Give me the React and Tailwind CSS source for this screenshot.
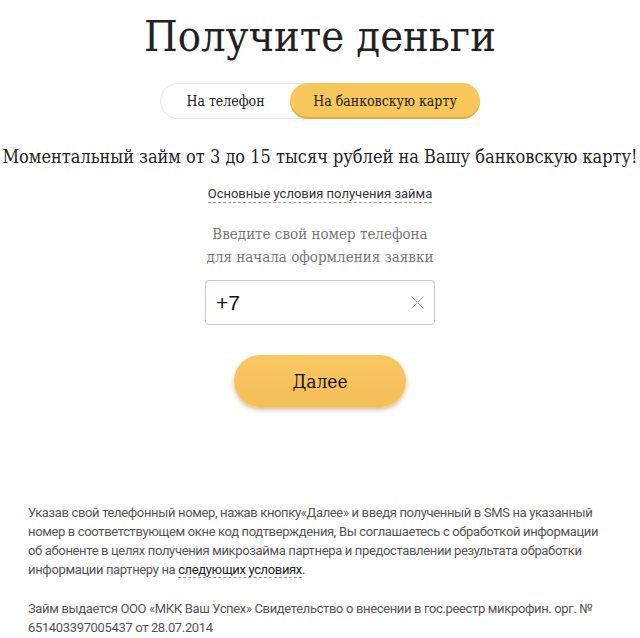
import React, { useState } from "react";

export default function App() {
  const [mode, setMode] = useState("card");
  const [phone, setPhone] = useState("+7");

  const serif = { fontFamily: '"DejaVu Serif Condensed", "DejaVu Serif", serif' };
  const narrow = { fontFamily: 'Roboto, "Liberation Sans", sans-serif' };

  return (
    <div className="w-[640px] h-[638px] bg-white overflow-hidden text-[#222]">
      <h1
        className="text-center text-[43px] leading-none pt-[15px] font-normal text-[#222]"
        style={serif}
      >
        Получите деньги
      </h1>

      {/* Переключатель */}
      <div className="flex justify-center mt-[25px]">
        <div className="flex w-[320px] h-[36px] rounded-full border border-[#e6e6e6]">
          <button
            className="flex-1 text-[14px] text-[#222]"
            style={serif}
            onClick={() => setMode("phone")}
          >
            На телефон
          </button>
          <button
            className={`w-[190px] -my-px -mr-px rounded-full text-[14px] text-[#222] ${
              mode === "card"
                ? "bg-[#f8c75c] shadow-[inset_0_-2px_0_#e7ad3c]"
                : "bg-transparent"
            }`}
            style={serif}
            onClick={() => setMode("card")}
          >
            На банковскую карту
          </button>
        </div>
      </div>

      <p className="text-center text-[18px] mt-[24px] text-[#222] whitespace-nowrap" style={serif}>
        Моментальный займ от 3 до 15 тысяч рублей на Вашу банковскую карту!
      </p>

      <div className="flex justify-center mt-[16px]">
        <a
          href="#"
          className="text-[13px] text-[#333] border-b border-dashed border-[#999] leading-[16px]"
          style={narrow}
        >
          Основные условия получения займа
        </a>
      </div>

      <p
        className="text-center text-[15px] leading-[23px] text-[#777] mt-[20px]"
        style={serif}
      >
        Введите свой номер телефона
        <br />
        для начала оформления заявки
      </p>

      <div className="flex justify-center mt-[11px]">
        <div className="relative w-[230px] h-[45px] border border-[#c8c8c8] rounded-[4px]">
          <input
            value={phone}
            onChange={(e) => setPhone(e.target.value)}
            className="w-full h-full pl-[10px] pr-[36px] text-[21px] text-[#111] outline-none bg-transparent"
            style={{ fontFamily: '"Liberation Sans", Arial, sans-serif' }}
          />
          <button
            className="absolute right-[10px] top-[15px] w-[13px] h-[13px] text-[#999]"
            onClick={() => setPhone("")}
          >
            <svg viewBox="0 0 13 13" className="w-[13px] h-[13px]" fill="none" stroke="currentColor" strokeWidth="1">
              <path d="M0.5 0.5 12.5 12.5M12.5 0.5 0.5 12.5" />
            </svg>
          </button>
        </div>
      </div>

      <div className="flex justify-center mt-[30px]">
        <button
          className="w-[172px] h-[52px] rounded-full text-[19px] text-[#111] bg-gradient-to-b from-[#f9c862] to-[#f4bd58] shadow-[0_3px_4px_rgba(180,120,20,0.45)]"
          style={serif}
        >
          Далее
        </button>
      </div>

      <div
        className="px-[28px] mt-[96px] text-[13px] leading-[19px] text-[#555] tracking-[-0.35px]"
        style={narrow}
      >
        <p>
          Указав свой телефонный номер, нажав кнопку«Далее» и введя полученный в SMS на указанный
          номер в соответствующем окне код подтверждения, Вы соглашаетесь с обработкой информации
          об абоненте в целях получения микрозайма партнера и предоставлении результата обработки
          информации партнеру на{" "}
          <a href="#" className="text-[#222] border-b border-dashed border-[#999]">
            следующих условиях
          </a>
          .
        </p>
        <p className="mt-[20px]">
          Займ выдается ООО «МКК Ваш Успех» Свидетельство о внесении в гос.реестр микрофин. орг. №
          651403397005437 от 28.07.2014
        </p>
      </div>
    </div>
  );
}
